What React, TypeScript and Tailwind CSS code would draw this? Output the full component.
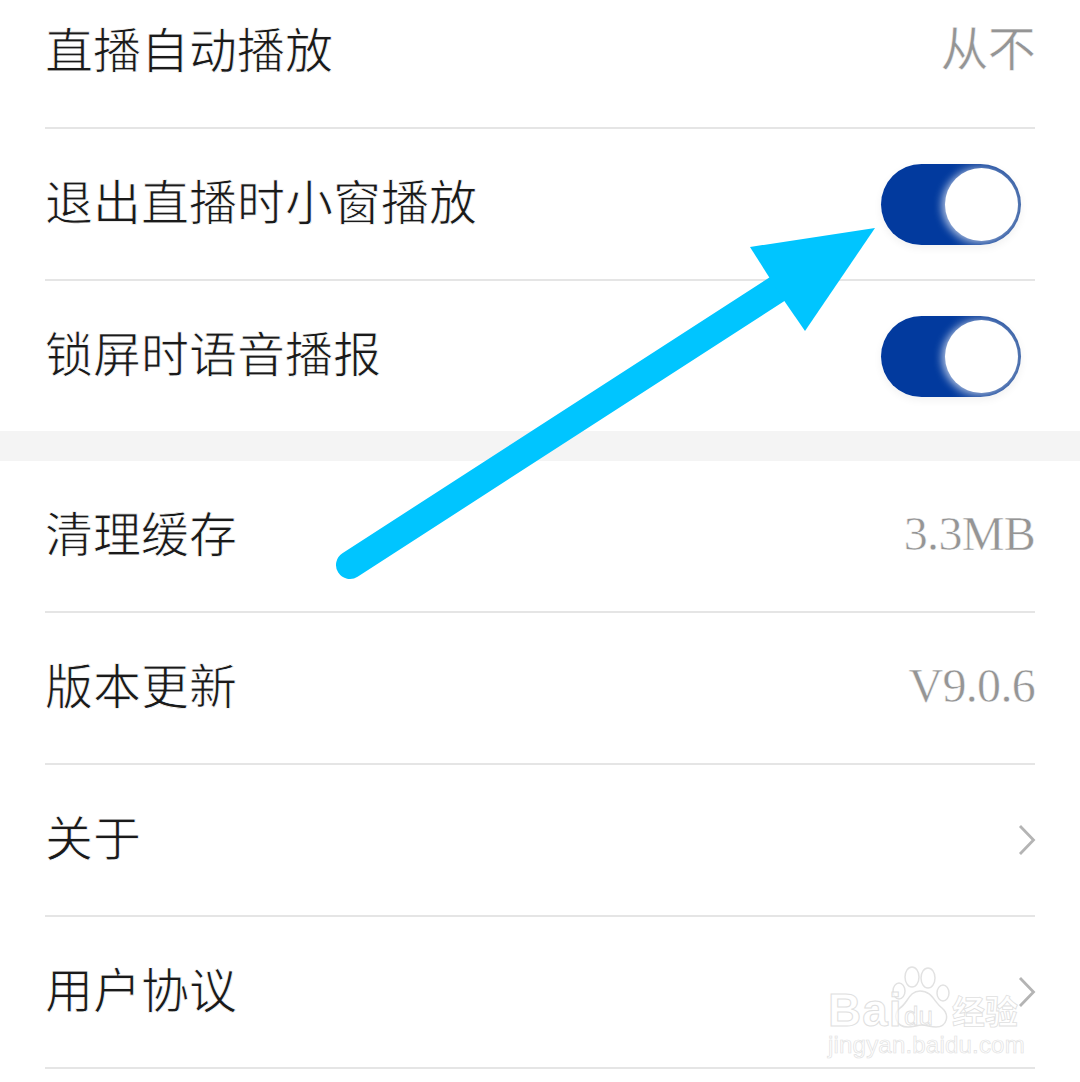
const CJK = "font-['Noto_Sans_CJK_SC',sans-serif]"

const Toggle = () => (
  <div className="relative mr-[14px] h-[81px] w-[140px] rounded-full bg-[linear-gradient(90deg,#023a9e_0%,#023a9e_50%,#1f4ea1_75%,#3c63a6_100%)] shadow-[0_3px_8px_rgba(0,0,0,0.06)]">
    <div className="absolute right-[3px] top-[4px] h-[73px] w-[73px] rounded-full bg-white shadow-[-3px_1px_9px_rgba(255,255,255,0.7)]" />
  </div>
)

const Chevron = () => (
  <svg width="18" height="32" viewBox="0 0 18 32" fill="none" className="mr-[-1px]">
    <path d="M2 2 L15.5 16 L2 30" stroke="#b4b4b4" strokeWidth="2.8" />
  </svg>
)

const Row = ({label, value, control, last}: {label: string; value?: string; control?: React.ReactNode; last?: boolean}) => (
  <div className={`flex items-center justify-between ${last ? 'h-[150px]' : 'h-[152px] border-b-2 border-[#e5e5e5]'}`}>
    <span className={`${CJK} pb-[10px] text-[48px] leading-none text-[#1a1a1a] [-webkit-text-stroke:0.8px_white]`}>{label}</span>
    {value && <span className={`font-['Liberation_Serif','Noto_Sans_CJK_SC',serif] pb-[4px] text-[48px] leading-none tracking-[-0.7px] text-[#959595] [-webkit-text-stroke:0.5px_white]`}>{value}</span>}
    {control}
  </div>
)

const Arrow = () => (
  <svg className="absolute left-0 top-0" width="1080" height="1082" viewBox="0 0 1080 1082" fill="none">
    <path d="M350 565 L785 284" stroke="#00c5ff" strokeWidth="28" strokeLinecap="round" />
    <path d="M875 228 L750 247 L769 277 L785 302 L805 331 Z" fill="#00c5ff" />
  </svg>
)

const Watermark = () => (
  <div className="absolute left-[828px] top-[965px] h-[96px] w-[196px]">
    <svg className="absolute left-[64px] top-0" width="62" height="66" viewBox="0 0 62 66" fill="none" stroke="#e2e2e2" strokeWidth="1.5">
      <ellipse cx="20" cy="12" rx="7" ry="10" />
      <ellipse cx="36" cy="13" rx="7" ry="10" />
      <ellipse cx="7" cy="26" rx="6" ry="8" />
      <ellipse cx="51" cy="28" rx="6" ry="8" />
      <path d="M28 26 C17 26 16 38 8 43 C0 50 4 62 16 62 C22 62 25 60 30 60 C35 60 38 62 44 62 C55 62 58 50 50 43 C42 37 40 26 28 26 Z" fill="white" />
    </svg>
    <span className="absolute left-0 top-[22px] font-['Liberation_Sans',sans-serif] text-[46px] font-bold leading-none tracking-[1px] text-white/70 [-webkit-text-stroke:1px_#e0e0e0]">Bai</span>
    <span className="absolute left-[76px] top-[38px] font-['Liberation_Sans',sans-serif] text-[26px] leading-none text-white/70 [-webkit-text-stroke:0.8px_#e0e0e0]">du</span>
    <span className={`absolute left-[124px] top-[29px] ${CJK} text-[33px] font-bold leading-none text-white/70 [-webkit-text-stroke:0.8px_#e0e0e0]`}>经验</span>
    <span className="absolute left-0 top-[68px] font-['Liberation_Sans',sans-serif] text-[24px] leading-none tracking-[0.2px] text-white/70 [-webkit-text-stroke:0.7px_#e2e2e2]">jingyan.baidu.com</span>
  </div>
)

export default function App() {
  return (
    <div className="relative h-[1082px] w-[1080px] overflow-hidden bg-white">
      <div className="-mt-[23px]">
        <div className="pl-[45px] pr-[45px]">
          <Row label="直播自动播放" value="从不" />
          <Row label="退出直播时小窗播放" control={<Toggle />} />
          <Row label="锁屏时语音播报" control={<Toggle />} last />
        </div>
        <div className="h-[30px] bg-[#f4f4f4]" />
        <div className="pl-[45px] pr-[45px]">
          <Row label="清理缓存" value="3.3MB" />
          <Row label="版本更新" value="V9.0.6" />
          <Row label="关于" control={<Chevron />} />
          <Row label="用户协议" control={<Chevron />} />
        </div>
      </div>
      <Arrow />
      <Watermark />
    </div>
  )
}
